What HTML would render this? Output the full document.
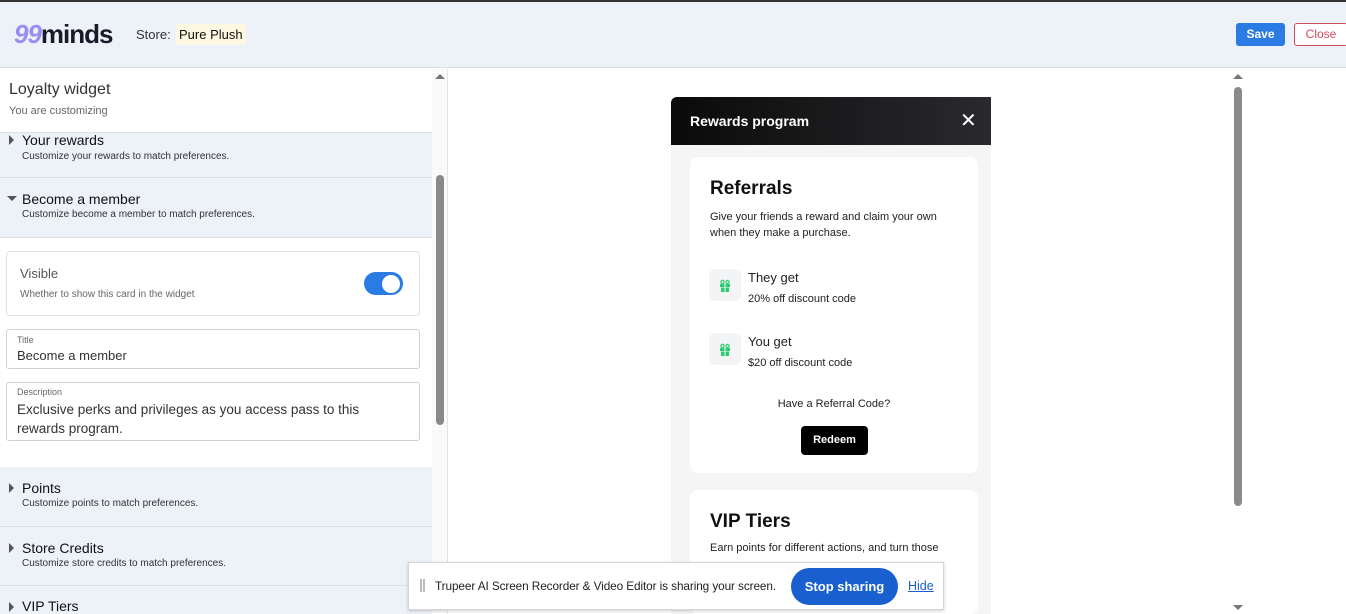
<!DOCTYPE html>
<html style="width:1346px;height:614px;overflow:hidden"><head><style>
*{margin:0;padding:0;box-sizing:border-box}
body{width:1346px;height:614px;overflow:hidden;background:#fff;font-family:"Liberation Sans",sans-serif;position:relative;color:#222}
.a{position:absolute}
.sec{position:absolute;left:0;width:432px;background:#edf1f8;border-bottom:1px solid #dde2ea}
.sec .t{position:absolute;left:22px;font-size:14px;color:#111}
.sec .d{position:absolute;left:22px;font-size:10px;color:#333}
.tri{position:absolute;left:9px;width:0;height:0;border-top:5px solid transparent;border-bottom:5px solid transparent;border-left:5px solid #555}
.gift{position:absolute;width:32px;height:32px;background:#f3f4f6;border-radius:6px}
</style></head><body>
<div class="a" style="left:0;top:0;width:1346px;height:2px;background:#333"></div>
<div class="a" style="left:0;top:2px;width:1346px;height:66px;background:#edf1f8;border-bottom:1px solid #d8dde6"></div>
<div class="a" style="left:14px;top:19px;font-size:26px;font-weight:bold;letter-spacing:-1px"><span style="color:#9b8cf2;font-style:italic">99</span><span style="color:#1a1a2a">minds</span></div>
<div class="a" style="left:136px;top:27px;font-size:13px;color:#333">Store:</div>
<div class="a" style="left:176px;top:24px;padding:3px 3px;background:#fdf8e1;font-size:13px;color:#111">Pure Plush</div>
<div class="a" style="left:1236px;top:23px;width:49px;height:23px;background:#2b7be4;border-radius:3px;color:#fff;font-size:12px;font-weight:bold;text-align:center;line-height:23px">Save</div>
<div class="a" style="left:1294px;top:23px;width:54px;height:23px;border:1px solid #d04a5e;border-radius:3px;color:#d04a5e;font-size:12px;text-align:center;line-height:21px;background:#fff">Close</div>

<div class="a" style="left:9px;top:81px;font-size:16px;color:#333">Loyalty widget</div>
<div class="a" style="left:9px;top:105px;font-size:11px;color:#666">You are customizing</div>
<div class="sec" style="top:132px;height:46px;border-top:1px solid #dde2ea"><div class="tri" style="top:2px"></div><div class="t" style="top:-1px">Your rewards</div><div class="d" style="top:18px">Customize your rewards to match preferences.</div></div>
<div class="sec" style="top:178px;height:60px"><div class="a" style="left:7px;top:18px;border-left:5px solid transparent;border-right:5px solid transparent;border-top:5px solid #555"></div><div class="t" style="top:13px">Become a member</div><div class="d" style="top:31px">Customize become a member to match preferences.</div></div>
<div class="a" style="left:6px;top:251px;width:414px;height:65px;border:1px solid #dde2ea;border-radius:4px"></div>
<div class="a" style="left:20px;top:266px;font-size:13px;color:#555">Visible</div>
<div class="a" style="left:20px;top:289px;font-size:10px;color:#666">Whether to show this card in the widget</div>
<div class="a" style="left:364px;top:272px;width:39px;height:23px;border-radius:12px;background:#2b7be4"></div>
<div class="a" style="left:382px;top:275px;width:18px;height:18px;border-radius:50%;background:#fff"></div>
<div class="a" style="left:6px;top:329px;width:414px;height:40px;border:1px solid #ccd1d9;border-radius:3px"></div>
<div class="a" style="left:17px;top:335px;font-size:9px;color:#666">Title</div>
<div class="a" style="left:17px;top:348px;font-size:13px;color:#333">Become a member</div>
<div class="a" style="left:6px;top:382px;width:414px;height:59px;border:1px solid #ccd1d9;border-radius:3px"></div>
<div class="a" style="left:17px;top:387px;font-size:9px;color:#666">Description</div>
<div class="a" style="left:17px;top:400px;font-size:13.5px;color:#333;line-height:19px;width:370px">Exclusive perks and privileges as you access pass to this rewards program.</div>
<div class="sec" style="top:467px;height:60px"><div class="tri" style="top:16px"></div><div class="t" style="top:13px">Points</div><div class="d" style="top:31px">Customize points to match preferences.</div></div>
<div class="sec" style="top:527px;height:59px"><div class="tri" style="top:16px"></div><div class="t" style="top:13px">Store Credits</div><div class="d" style="top:31px">Customize store credits to match preferences.</div></div>
<div class="sec" style="top:586px;height:28px;border-bottom:none"><div class="tri" style="top:16px"></div><div class="t" style="top:12px">VIP Tiers</div></div>

<div class="a" style="left:432px;top:69px;width:16px;height:545px;background:#fafafa;border-right:1px solid #e4e4e4"></div>
<div class="a" style="left:435px;top:74px;border-left:5px solid transparent;border-right:5px solid transparent;border-bottom:5px solid #777"></div>
<div class="a" style="left:436px;top:175px;width:8px;height:250px;border-radius:4px;background:#8a8a8a"></div>
<div class="a" style="left:1233px;top:74px;border-left:5px solid transparent;border-right:5px solid transparent;border-bottom:5px solid #777"></div>
<div class="a" style="left:1234px;top:87px;width:8px;height:419px;border-radius:4px;background:#8a8a8a"></div>
<div class="a" style="left:1233px;top:605px;border-left:5px solid transparent;border-right:5px solid transparent;border-top:5px solid #777"></div>

<div class="a" style="left:671px;top:97px;width:320px;height:517px;background:#f5f5f5"></div>
<div class="a" style="left:671px;top:97px;width:320px;height:48px;background:linear-gradient(90deg,#0a0a0a,#2a2a2e);border-radius:6px 0 0 0"></div>
<div class="a" style="left:690px;top:113px;font-size:14px;font-weight:bold;color:#fff">Rewards program</div>
<div class="a" style="left:960px;top:108px;font-size:20px;color:#fff">✕</div>
<div class="a" style="left:690px;top:157px;width:288px;height:316px;background:#fff;border-radius:8px"></div>
<div class="a" style="left:710px;top:178px;font-size:19px;font-weight:bold;color:#111">Referrals</div>
<div class="a" style="left:710px;top:209px;font-size:11px;line-height:16px;color:#222">Give your friends a reward and claim your own<br>when they make a purchase.</div>
<div class="gift" style="left:709px;top:269px"><svg width="32" height="32" viewBox="0 0 32 32"><rect x="11" y="15" width="10" height="3" fill="#2ecc71"/><rect x="12" y="18.5" width="8" height="4.5" fill="#2ecc71"/><circle cx="13.5" cy="13" r="1.6" fill="none" stroke="#2ecc71" stroke-width="1.2"/><circle cx="18.5" cy="13" r="1.6" fill="none" stroke="#2ecc71" stroke-width="1.2"/><rect x="15.5" y="15" width="1" height="8" fill="#f3f4f6"/></svg></div>
<div class="a" style="left:748px;top:270px;font-size:13px">They get</div>
<div class="a" style="left:748px;top:293px;font-size:11px">20% off discount code</div>
<div class="gift" style="left:709px;top:333px"><svg width="32" height="32" viewBox="0 0 32 32"><rect x="11" y="15" width="10" height="3" fill="#2ecc71"/><rect x="12" y="18.5" width="8" height="4.5" fill="#2ecc71"/><circle cx="13.5" cy="13" r="1.6" fill="none" stroke="#2ecc71" stroke-width="1.2"/><circle cx="18.5" cy="13" r="1.6" fill="none" stroke="#2ecc71" stroke-width="1.2"/><rect x="15.5" y="15" width="1" height="8" fill="#f3f4f6"/></svg></div>
<div class="a" style="left:748px;top:334px;font-size:13px">You get</div>
<div class="a" style="left:748px;top:357px;font-size:11px">$20 off discount code</div>
<div class="a" style="left:690px;top:398px;width:288px;text-align:center;font-size:11px">Have a Referral Code?</div>
<div class="a" style="left:801px;top:426px;width:67px;height:29px;background:#000;border-radius:4px;color:#fff;font-size:11px;font-weight:bold;text-align:center;line-height:29px">Redeem</div>
<div class="a" style="left:690px;top:490px;width:288px;height:124px;background:#fff;border-radius:8px"></div>
<div class="a" style="left:710px;top:511px;font-size:19px;font-weight:bold;color:#111">VIP Tiers</div>
<div class="a" style="left:710px;top:542px;font-size:11px">Earn points for different actions, and turn those</div>

<div class="a" style="left:408px;top:562px;width:536px;height:48px;background:#fff;border:1px solid #d6d6d6;box-shadow:0 1px 3px rgba(0,0,0,.2)"></div>
<div class="a" style="left:420px;top:579px;width:5px;height:13px;border-left:2px solid #bbb;border-right:2px solid #bbb"></div>
<div class="a" style="left:435px;top:579px;font-size:11.8px;color:#222;white-space:nowrap;letter-spacing:-0.1px">Trupeer AI Screen Recorder &amp; Video Editor is sharing your screen.</div>
<div class="a" style="left:791px;top:568px;width:107px;height:37px;border-radius:19px;background:#1a5fd0;color:#fff;font-size:13px;font-weight:bold;text-align:center;line-height:37px">Stop sharing</div>
<div class="a" style="left:908px;top:579px;font-size:12.5px;color:#1a5fd0;text-decoration:underline">Hide</div>
</body></html>
